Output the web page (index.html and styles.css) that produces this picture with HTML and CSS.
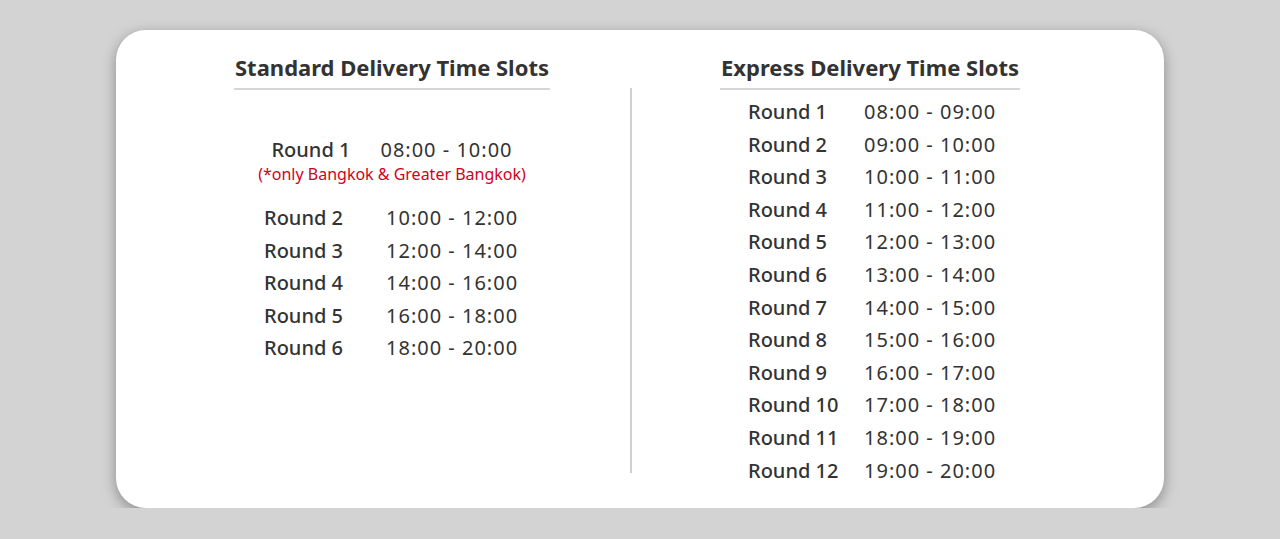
FILE: index.html
```html
<!DOCTYPE html>
<html lang="en">
<head>
    <meta charset="UTF-8">
    <title>Delivery Time Slots</title>
    <link rel="stylesheet" href="styles.css">
</head>
<body>
    <div class="card">
        <div class="col">
            <h2 class="title">Standard Delivery Time Slots</h2>
            <div class="first-row">
                <span class="label">Round 1</span>
                <span class="time">08:00 - 10:00</span>
            </div>
            <div class="note">(*only Bangkok &amp; Greater Bangkok)</div>
            <div class="slots std">
                <span class="label">Round 2</span><span class="time">10:00 - 12:00</span>
                <span class="label">Round 3</span><span class="time">12:00 - 14:00</span>
                <span class="label">Round 4</span><span class="time">14:00 - 16:00</span>
                <span class="label">Round 5</span><span class="time">16:00 - 18:00</span>
                <span class="label">Round 6</span><span class="time">18:00 - 20:00</span>
            </div>
        </div>
        <div class="divider"></div>
        <div class="col">
            <h2 class="title">Express Delivery Time Slots</h2>
            <div class="slots exp">
                <span class="label">Round 1</span><span class="time">08:00 - 09:00</span>
                <span class="label">Round 2</span><span class="time">09:00 - 10:00</span>
                <span class="label">Round 3</span><span class="time">10:00 - 11:00</span>
                <span class="label">Round 4</span><span class="time">11:00 - 12:00</span>
                <span class="label">Round 5</span><span class="time">12:00 - 13:00</span>
                <span class="label">Round 6</span><span class="time">13:00 - 14:00</span>
                <span class="label">Round 7</span><span class="time">14:00 - 15:00</span>
                <span class="label">Round 8</span><span class="time">15:00 - 16:00</span>
                <span class="label">Round 9</span><span class="time">16:00 - 17:00</span>
                <span class="label">Round 10</span><span class="time">17:00 - 18:00</span>
                <span class="label">Round 11</span><span class="time">18:00 - 19:00</span>
                <span class="label">Round 12</span><span class="time">19:00 - 20:00</span>
            </div>
        </div>
    </div>
</body>
</html>
```

FILE: styles.css
```css
body { margin: 0; padding: 30px 0 0 116px; background: #d3d3d3; font-family: "Noto Sans", sans-serif; color: #333; }
.card { box-sizing: border-box; width: 1048px; height: 478px; background: #fff; border-radius: 30px; box-shadow: 0 4px 14px rgba(0,0,0,0.35); display: flex; padding: 22px 0 0 56px; }
.col { width: 440px; display: flex; flex-direction: column; align-items: center; }
.divider { width: 2px; height: 385px; background: #d0d0d0; margin: 36px 18px 0; }
.title { margin: 0; font-size: 22px; font-weight: 700; line-height: 30px; padding: 0 1px 6px; border-bottom: 2px solid #d6d6d6; }
.label { font-weight: 500; white-space: nowrap; }
.time { letter-spacing: 1px; white-space: nowrap; }
.first-row { display: flex; gap: 30px; font-size: 20px; line-height: 32px; margin-top: 44px; }
.note { color: #d0021b; font-size: 16px; line-height: 16px; margin-bottom: 20px; }
.slots { display: grid; font-size: 20px; line-height: 32.6px; }
.slots.std { grid-template-columns: 122px 134px; }
.slots.exp { grid-template-columns: 116px 134px; margin: 6px 0 0 6px; }
```
